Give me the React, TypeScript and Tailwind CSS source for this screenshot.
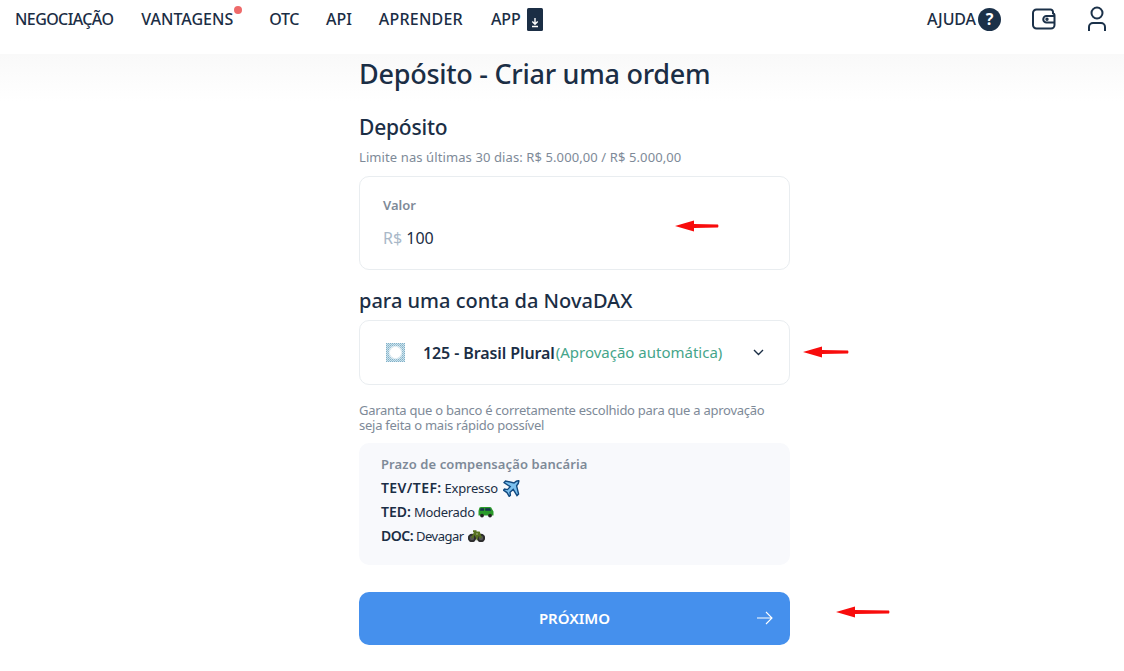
import React from "react";

const font = { fontFamily: '"Noto Sans", "Open Sans", sans-serif' };

function RedArrow({ className, w }: { className: string; w: number }) {
  return (
    <svg className={`absolute ${className}`} width={w} height="14" viewBox={`0 0 ${w} 14`}>
      <path d={`M0 7 L19 1.5 L19 5 L${w - 1} 5.5 Q${w} 7 ${w - 1} 8.5 L19 9 L19 12.5 Z`} fill="#f80c0c" />
    </svg>
  );
}

function Plane() {
  return (
    <svg width="17" height="17" viewBox="0 0 17 17" className="ml-[2px] inline-block">
      <path d="M15.8 .8 C14 .4 12.5 1.6 11 3 L2.5 1 1 2.6 7.2 6.6 4.5 9.6 1.5 9 .5 10.2 4 12.6 6.2 16.4 7.4 15.2 7 12.2 10.2 9.4 14 15.6 15.6 14 13.6 5.8 C15 4.2 16.2 2.8 15.8 .8 Z" fill="#7cc0ee" stroke="#124a80" strokeWidth="1.4" />
    </svg>
  );
}

function Van() {
  return (
    <svg width="16" height="12" viewBox="0 0 16 12" className="inline-block">
      <path d="M1 3 Q1 1 3 1 H12 Q13.5 1 14 3 L15.5 5.5 V9.5 H.5 V5 Z" fill="#2a9a2a" />
      <path d="M2.5 2.2 H6 V4.8 H2 Z M7.2 2.2 H12 L13.2 4.8 H7.2 Z" fill="#17324d" />
      <circle cx="4" cy="9.6" r="1.9" fill="#222" />
      <circle cx="12" cy="9.6" r="1.9" fill="#222" />
    </svg>
  );
}

function Bike() {
  return (
    <svg width="17" height="12" viewBox="0 0 17 12" className="ml-[1px] inline-block">
      <circle cx="4" cy="8" r="3.2" fill="#555" stroke="#2d2d2d" strokeWidth="2" />
      <circle cx="13" cy="8" r="3.2" fill="#555" stroke="#2d2d2d" strokeWidth="2" />
      <path d="M4 8 L7 2.5 H11 L13 8 M7 2.5 L9 8 L11 2.5 M5 1.2 H8.5" fill="none" stroke="#56701f" strokeWidth="2" />
    </svg>
  );
}

function BankLogo() {
  return (
    <svg width="19" height="19" viewBox="0 0 19 19">
      <defs>
        <pattern id="dots" width="2" height="2" patternUnits="userSpaceOnUse">
          <rect width="2" height="2" fill="#cfe3ec" />
          <rect width="1" height="1" fill="#7fb0c8" />
          <rect x="1" y="1" width="1" height="1" fill="#98c2d6" />
        </pattern>
        <radialGradient id="fade" cx="50%" cy="50%" r="55%">
          <stop offset="65%" stopColor="#fff" stopOpacity="1" />
          <stop offset="100%" stopColor="#fff" stopOpacity="0" />
        </radialGradient>
      </defs>
      <rect width="19" height="19" fill="url(#dots)" />
      <rect x="2.5" y="2.5" width="14" height="14" rx="2" fill="url(#fade)" />
    </svg>
  );
}

export default function App() {
  return (
    <div style={font} className="relative h-[671px] w-[1124px] overflow-hidden bg-white text-[#1b2e45]">
      <header className="flex h-[54px] items-center justify-between pb-[16px] pl-[15px] pr-[17px] text-[16px] font-medium">
        <nav className="flex items-center gap-[27px]">
          <span className="mr-[1px] tracking-[-0.6px]">NEGOCIAÇÃO</span>
          <span className="relative mr-[9px]">
            VANTAGENS
            <span className="absolute -right-[9px] top-[-1px] h-[8px] w-[8px] rounded-full bg-[#ee6a6a]" />
          </span>
          <span className="tracking-[-0.4px]">OTC</span>
          <span>API</span>
          <span className="mr-[1px] tracking-[0.2px]">APRENDER</span>
          <span className="flex items-center gap-[6px]">
            APP
            <svg width="16" height="23" viewBox="0 0 16 23">
              <rect width="16" height="23" rx="1.5" fill="#1b2e45" />
              <path d="M8 10 V16 M5.3 13.5 L8 16.2 L10.7 13.5 M5 18.5 H11" stroke="#fff" strokeWidth="1.4" fill="none" />
            </svg>
          </span>
        </nav>
        <div className="flex items-center">
          <span className="flex items-center gap-[2px] tracking-[-0.1px]">
            AJUDA
            <span className="flex h-[23px] w-[23px] items-center justify-center rounded-full bg-[#1b3149] text-[16px] font-bold text-white">?</span>
          </span>
          <svg className="ml-[31px]" width="24" height="22" viewBox="0 0 24 22" fill="none" stroke="#1b3149" strokeWidth="2">
            <path d="M21 5 V4 A2.5 2.5 0 0 0 18.5 1.5 H4.5 A3.5 3.5 0 0 0 1 5 V17 A3.5 3.5 0 0 0 4.5 20.5 H19 A3.5 3.5 0 0 0 22.5 17 V7.5 A2.5 2.5 0 0 0 20 5" />
            <path d="M22.5 8 H14.5 A3.2 3.2 0 0 0 14.5 14.5 H22.5" />
            <circle cx="15" cy="11.2" r="0.7" fill="#1b3149" />
          </svg>
          <svg className="ml-[31px]" width="20" height="26" viewBox="0 0 20 26" fill="none" stroke="#1b3149" strokeWidth="2">
            <circle cx="10" cy="7" r="5.5" />
            <path d="M2 25 V21 A4 4 0 0 1 6 17 H14 A4 4 0 0 1 18 21 V25" />
          </svg>
        </div>
      </header>

      <main className="bg-gradient-to-b from-[#f9f9f9] to-white to-[48px] pl-[359px]">
        <div className="w-[431px]">
          <h1 className="h-[41px] text-[27px] font-medium leading-[39px] tracking-[-0.27px]">Depósito - Criar uma ordem</h1>
          <h2 className="mt-[18px] text-[21px] font-medium leading-[29px] tracking-[-0.2px]">Depósito</h2>
          <p className="mt-[6px] text-[13px] leading-[18px] tracking-[0.1px] text-[#7e8a98]">Limite nas últimas 30 dias: R$ 5.000,00 / R$ 5.000,00</p>

          <section className="mt-[10px] h-[94px] rounded-[10px] border border-[#e9edf0] pl-[23px] pt-[19px]">
            <div className="text-[13px] font-semibold leading-[18px] text-[#7e8a98]">Valor</div>
            <div className="mt-[13px] text-[16px] leading-[22px]">
              <span className="text-[#a9b8c8]">R$</span> 100
            </div>
          </section>

          <h2 className="mt-[17px] text-[20px] font-medium leading-[28px]">para uma conta da NovaDAX</h2>

          <section className="mt-[5px] flex h-[65px] items-center rounded-[10px] border border-[#e9edf0] pl-[26px] pr-[25px]">
            <BankLogo />
            <span className="ml-[18px] text-[16px] font-semibold tracking-[-0.1px]">125 - Brasil Plural</span>
            <span className="ml-[1px] text-[15px] text-[#45a58a]">(Aprovação automática)</span>
            <svg className="ml-auto" width="11" height="7" viewBox="0 0 11 7" fill="none" stroke="#1b2e45" strokeWidth="1.4">
              <path d="M1 1 L5.5 5.5 L10 1" />
            </svg>
          </section>

          <p className="mt-[18px] whitespace-nowrap text-[13px] leading-[15px] tracking-[-0.26px] text-[#7e8a98]">
            Garanta que o banco é corretamente escolhido para que a aprovação
            <br />
            seja feita o mais rápido possível
          </p>

          <section className="mt-[10px] h-[122px] rounded-[10px] bg-[#f8f9fc] pl-[22px] pt-[9px] text-[14px] leading-[24px]">
            <div className="text-[13px] font-semibold tracking-[0.1px] text-[#7e8a98]">Prazo de compensação bancária</div>
            <div className="flex items-center gap-[3px] text-[13px] tracking-[-0.2px]"><b className="text-[14px] font-semibold tracking-[0.4px]">TEV/TEF:</b> Expresso <Plane /></div>
            <div className="flex items-center gap-[3px] text-[13px] tracking-[-0.3px]"><b className="text-[14px] font-semibold tracking-[0px]">TED:</b> Moderado <Van /></div>
            <div className="flex items-center gap-[3px] text-[13px] tracking-[-0.5px]"><b className="text-[14px] font-semibold tracking-[-0.5px]">DOC:</b> Devagar <Bike /></div>
          </section>

          <button className="relative mt-[27px] flex h-[53px] w-full items-center justify-center rounded-[10px] bg-[#4590ed] text-[15px] font-semibold text-white">
            PRÓXIMO
            <svg className="absolute right-[17px] top-[19px]" width="16" height="14" viewBox="0 0 16 14" fill="none" stroke="#fff" strokeWidth="1.1">
              <path d="M0 7 H15 M9 1 L15 7 L9 13" />
            </svg>
          </button>
        </div>
      </main>

      <RedArrow className="left-[675px] top-[219px]" w={44} />
      <RedArrow className="left-[803px] top-[345px]" w={46} />
      <RedArrow className="left-[836px] top-[605px]" w={54} />
    </div>
  );
}
